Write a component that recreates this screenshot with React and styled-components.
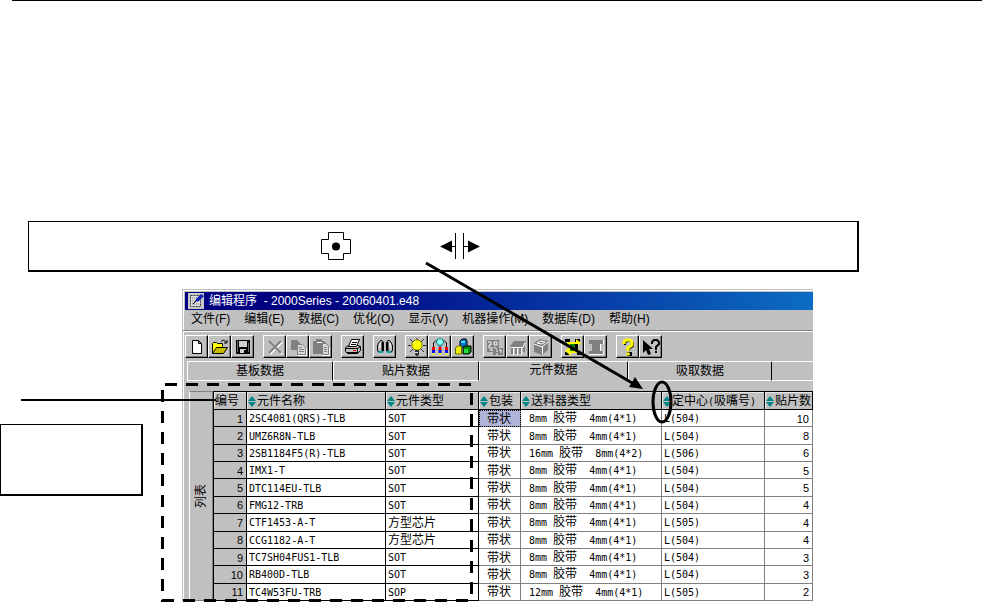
import React, { useState } from 'react';
import styled, { createGlobalStyle } from 'styled-components';

const GlobalStyle = createGlobalStyle`
  * {
    box-sizing: border-box;
  }

  body {
    margin: 0;
    background: #fff;
    color: #000;
    font-family: 'Liberation Sans', 'Noto Sans CJK SC', sans-serif;
    font-size: 12px;
    line-height: 16px;
  }

  button {
    padding: 0;
    border: 0;
    background: none;
    color: inherit;
    font: inherit;
    cursor: pointer;
  }
`;

const Page = styled.div`
  position: relative;
  min-height: 100vh;
  overflow: hidden;
`;

const TopRule = styled.hr`
  height: 1px;
  margin: 0 0 0 12px;
  border: 0;
  background: #000;
`;

const NoteBox = styled.div`
  display: flex;
  align-items: center;
  gap: 88px;
  height: 51px;
  margin: 220px 123px 0 28px;
  padding-left: 291px;
  border: solid #000;
  border-width: 1px 2px 2px 1px;
`;

const Figure = styled.div`
  display: flex;
  margin-top: 17px;
  padding-right: 169px;
`;

const Side = styled.div`
  flex: none;
  width: 182px;
  padding-top: 135px;
`;

const Callout = styled.div`
  width: 143px;
  height: 72px;
  border: solid #000;
  border-width: 1px 2px 2px 1px;
`;

const AppWindow = styled.div`
  flex: 1;
  min-width: 0;
  background: #c0c0c0;
  border-top: 1px solid #c0c0c0;
  border-left: 1px solid #c0c0c0;
  box-shadow: inset 1px 1px #fff;
`;

const TitleBar = styled.div`
  display: flex;
  align-items: center;
  gap: 5px;
  height: 18px;
  margin: 2px 0 0 2px;
  padding-left: 3px;
  background: linear-gradient(90deg, #000080 20%, #0c6cc4);
  color: #fff;
  white-space: pre;
`;

const MenuBar = styled.nav`
  display: flex;
  gap: 14px;
  height: 21px;
  padding-left: 8px;
  border-bottom: 1px solid #808080;
`;

const MenuItem = styled.button`
  height: 18px;
  white-space: nowrap;
`;

const ToolBar = styled.div`
  display: flex;
  gap: 9px;
  height: 30px;
  padding: 3px 0 0 2px;
  border-top: 1px solid #fff;
`;

const ToolGroup = styled.div`
  display: flex;
`;

const ToolButton = styled.button`
  display: flex;
  align-items: center;
  justify-content: center;
  width: 23px;
  height: 23px;
  border: 1px solid;
  border-color: #fff #000 #000 #fff;
  box-shadow: inset -1px -1px #808080;
`;

const TabBar = styled.div`
  display: flex;
  height: 20px;
  padding-left: 4px;
`;

const Tab = styled.button`
  flex: none;
  width: ${(props) => props.$width}px;
  height: 20px;
  padding-bottom: ${(props) => (props.$active ? 2 : 0)}px;
  border-top: 1px solid #fff;
  border-left: 1px solid #fff;
  border-bottom: 1px solid ${(props) => (props.$active ? '#c0c0c0' : '#fff')};
  border-right: 1px solid #000;
  border-radius: 2px 2px 0 0;
`;

const TabRest = styled.div`
  flex: 1;
  border-top: 1px solid #fff;
  border-bottom: 1px solid #fff;
`;

const Content = styled.div`
  display: flex;
  padding-top: 10px;
`;

const ListTab = styled.button`
  flex: none;
  display: flex;
  align-items: center;
  justify-content: center;
  width: 24px;
  margin-left: 6px;
  border: 1px solid;
  border-color: #808080 #808080 #808080 #fff;

  span {
    writing-mode: vertical-rl;
    text-orientation: sideways;
    transform: rotate(180deg);
  }
`;

const Table = styled.table`
  flex: 1;
  min-width: 0;
  height: 210px;
  table-layout: fixed;
  border-collapse: collapse;
  line-height: 14px;
`;

const HeadCell = styled.th`
  height: 18px;
  padding: 1px 0 0 1px;
  overflow: hidden;
  border: 1px solid #000;
  background: #c0c0c0;
  box-shadow: inset 1px 1px #e8e8e8;
  font-weight: 400;
  text-align: left;
  white-space: nowrap;
`;

const SortButton = styled.button`
  display: flex;
  align-items: center;
  gap: 1px;
  height: 14px;
`;

const RowNumber = styled.th`
  padding: 1px 3px 0 0;
  border: 1px solid #000;
  background: #c0c0c0;
  font-size: 11px;
  font-weight: 400;
  text-align: right;
`;

const Cell = styled.td`
  padding: 1px 3px 0 ${(props) => props.$pad || 2}px;
  overflow: hidden;
  border: 1px solid ${(props) => (props.$fixed ? '#000' : '#808080')};
  outline: ${(props) => (props.$selected ? '1px dotted #000' : 'none')};
  outline-offset: -1px;
  background: ${(props) => (props.$selected ? '#b0b4d8' : '#fff')};
  text-align: left;
  white-space: pre;
`;

const PackCell = styled(Cell)`
  text-align: center;
`;

const CountCell = styled(Cell)`
  font-size: 11px;
  text-align: right;
`;

const Mono = styled.span`
  font-family: 'DejaVu Sans Mono', 'Noto Sans CJK SC', monospace;
  font-size: 10px;
`;

const Marks = styled.svg`
  position: absolute;
  top: 0;
  left: 0;
  pointer-events: none;
`;

const Icon = ({ children }) => (
  <svg width='18' height='18' viewBox='0 0 18 18' fill='none' aria-hidden='true'>
    {children}
  </svg>
);

const SortMark = () => (
  <svg width='8' height='11' viewBox='0 0 8 11' aria-hidden='true'>
    <path d='M4 0L8 5H0zM0 6h8L4 11z' fill='#008484' />
  </svg>
);

const icons = {
  新建: (
    <Icon>
      <path d='M4.5 2.5h6l3 3v10h-9zM10.5 2.5v3h3' fill='#fff' stroke='#000' />
    </Icon>
  ),
  打开: (
    <Icon>
      <path d='M1.5 15.5v-10l1-1h3l1 1h5v3' fill='#ff0' stroke='#000' />
      <path d='M1.5 15.5l4-6h11l-4 6z' fill='#c8bc00' stroke='#000' />
      <path d='M10 3.5q3-3 5 1M13 5h3V2' stroke='#000' />
    </Icon>
  ),
  保存: (
    <Icon>
      <path d='M2 2h14v14H3l-1-1z' fill='#000' />
      <path d='M5 3h8v6H5zM6 11h6v4H6z' fill='#d0d0d0' />
      <path d='M10 12h2v3h-2z' fill='#000' />
      <path d='M3.5 3v11M14.5 5v9' stroke='#666' />
    </Icon>
  ),
  删除: (
    <Icon>
      <path d='M4 4l12 12M16 4L4 16' stroke='#fff' strokeWidth='2' />
      <path d='M3 3l12 12M15 3L3 15' stroke='#808080' strokeWidth='2' />
    </Icon>
  ),
  复制: (
    <Icon>
      <path d='M2 2h6l3 3v7H2z' fill='#808080' />
      <path d='M8.5 6.5h5l3 3v7h-8z' fill='#d8d8d8' stroke='#808080' />
      <path d='M10 9.5h3M10 11.5h5M10 13.5h5' stroke='#808080' />
      <path d='M17.5 10v7.5H9' stroke='#fff' />
    </Icon>
  ),
  粘贴: (
    <Icon>
      <path d='M1 3h3V1h6v2h3v13H1z' fill='#808080' />
      <path d='M10.5 5.5h4l2 3v8h-6z' fill='#d8d8d8' stroke='#808080' />
      <path d='M12 9.5h3M12 11.5h3M12 13.5h3' stroke='#808080' />
      <path d='M5 4.5h5M17.5 9v8.5H10' stroke='#fff' />
    </Icon>
  ),
  打印: (
    <Icon>
      <path d='M1.5 9.5l3-2h9l3 1v4l-3 3h-10l-2-2z' fill='#c0c0c0' stroke='#000' />
      <path d='M4.5 8.5l3-7h8l-3 7z' fill='#fff' stroke='#000' />
      <path d='M8 4.5h5M7 6.5h5M1.5 10.5h12l3-2M13.5 10.5v5M3 14.5h10' stroke='#000' />
      <path d='M9 12.5h3' stroke='#f00' />
    </Icon>
  ),
  查找: (
    <Icon>
      <path d='M2.5 5l2-2.5H6l1.5 2V12l-1 2h-4L1.500 12V8zM15.5 5l-2-2.500H12l-1.500 2V12l1 2h4l1-2V8z' fill='#c0c0c0' stroke='#000' />
      <path d='M6.500 4v9M11.500 4v9' stroke='#000' strokeWidth='2' />
      <path d='M4 5v5M14 5v5' stroke='#fff' />
      <path d='M3 14h4M11 14h4' stroke='#00a8b0' strokeWidth='2' />
    </Icon>
  ),
  提示: (
    <Icon>
      <path d='M9 0v3M2 1l3 3M16 1l-3 3M0 7.5h3M15 7.5h3M2 14l3-3M16 14l-3-3' stroke='#333' />
      <path d='M7 2h4l3 3v4l-3 3H7L4 9V5z' fill='#ff0' stroke='#887c00' />
      <path d='M6 5.5L7.500 4' stroke='#fff' />
      <path d='M7 12h4v4l-1 2H8l-1-2z' fill='#333' />
      <path d='M7 14.500h3' stroke='#ddd' />
    </Icon>
  ),
  优化: (
    <Icon>
      <path d='M2.5 9V5l3-3M15.500 9V5l-3-3M9 7v3' stroke='#000' />
      <circle cx='9' cy='4' r='3.5' fill='#8ff' stroke='#077' />
      <path d='M1 9h3v3H1zM7.500 9h3v3h-3zM14 9h3v3h-3z' fill='#f00' />
      <path d='M1 12h3v3H1zM7.500 12h3v3h-3zM14 12h3v3h-3z' fill='#00f' />
      <path d='M1.500 15h2v2h-2zM8 15h2v2H8zM14.500 15h2v2h-2z' fill='#ff0' />
    </Icon>
  ),
  元件: (
    <Icon>
      <path d='M6 3l2-2h4l1 2v6H6z' fill='#0070c0' stroke='#000' />
      <path d='M7 3h4v2H7z' fill='#4df' />
      <path d='M1.500 10l2-2h4v8h-6z' fill='#ee0' stroke='#660' />
      <path d='M9 10l2-2h6v6l-2 2H9z' fill='#080' stroke='#000' />
      <path d='M10 11h4v4h-4z' fill='#2d4' />
    </Icon>
  ),
  基板: (
    <Icon>
      <path d='M1 2h12v8h4v7H7v-3H1z' fill='#808080' />
      <path d='M2 4h3v3H3v3h4M8 4h3v3H8zM8 9l3 2M4 12h3M10 13h2M13 12h2v3M10 16h2' stroke='#fff' />
    </Icon>
  ),
  芯片: (
    <Icon>
      <path d='M1 8l4-5h12l-2 7H2z' fill='#808080' />
      <path d='M5 5h9M3 10v6M7 10v6M11 10v6M15 8v6' stroke='#808080' strokeWidth='2' />
      <path d='M2 9.5h12l2-5M4.5 11v6M8.5 11v6M12.5 11v6' stroke='#fff' />
    </Icon>
  ),
  料盒: (
    <Icon>
      <path d='M2 5l6-4 8 2v9l-6 5-8-3z' fill='#808080' />
      <path d='M2 6l8 3 6-5M10.5 9v7M5 5l4-2 4 1-3 2z' stroke='#fff' />
    </Icon>
  ),
  传送: (
    <Icon>
      <path d='M1 1h5v3H1zM11 1h5v3h-5zM1 14h4v3H1zM13 14h4v3h-4z' fill='#000' />
      <path d='M3 4h9V1l5 4-5 4V7H3zM15 11H7V8l-6 5 6 5v-3h8z' fill='#ff0' />
      <path d='M6 6h5v7H6z' fill='#008000' />
      <path d='M11 6h3v7h-3z' fill='#000' />
    </Icon>
  ),
  停止: (
    <Icon>
      <path d='M2 2h14v4h-3v7h3v3H2v-3h3V6H2z' fill='#808080' />
      <path d='M2 16.5h14.5V13M13.5 6v7M16.5 2v4' stroke='#fff' />
    </Icon>
  ),
  帮助: (
    <Icon>
      <path d='M6 7V5l2-2h4l2 2v3l-4 3v2M9 15h3v3H9z' stroke='#000' strokeWidth='2' />
      <path d='M5 6V4l2-2h4l2 2v3l-4 3v3' stroke='#ff0' strokeWidth='3' />
      <path d='M7.500 14.500h3v3h-3z' fill='#ff0' />
    </Icon>
  ),
  这是什么: (
    <Icon>
      <path d='M1 2v13l3-3 2 5 3-1-2-5h4z' fill='#000' />
      <path d='M10 6V4l2-2h3l2 2v2l-3 3v3M14 13v2' stroke='#000' strokeWidth='2' />
    </Icon>
  ),
};

const menus = ['文件(F)', '编辑(E)', '数据(C)', '优化(O)', '显示(V)', '机器操作(M)', '数据库(D)', '帮助(H)'];

const toolGroups = [
  ['新建', '打开', '保存'],
  ['删除', '复制', '粘贴'],
  ['打印'],
  ['查找'],
  ['提示', '优化', '元件'],
  ['基板', '芯片', '料盒'],
  ['传送', '停止'],
  ['帮助', '这是什么'],
];

const disabledTools = ['删除', '复制', '粘贴', '基板', '芯片', '料盒', '停止'];

const tabs = [
  { label: '基板数据', width: 146 },
  { label: '贴片数据', width: 146 },
  { label: '元件数据', width: 149 },
  { label: '吸取数据', width: 144 },
];

const columns = [
  { label: '元件名称', width: 139 },
  { label: '元件类型', width: 93 },
  { label: '包装', width: 42 },
  { label: '送料器类型', width: 141 },
  { label: '定中心(吸嘴号)', width: 103 },
  { label: '贴片数' },
];

const parts = [
  { name: '2SC4081(QRS)-TLB', type: 'SOT', tape: '8mm', pitch: '4mm(4*1)', center: 'L(504)', count: 10 },
  { name: 'UMZ6R8N-TLB', type: 'SOT', tape: '8mm', pitch: '4mm(4*1)', center: 'L(504)', count: 8 },
  { name: '2SB1184F5(R)-TLB', type: 'SOT', tape: '16mm', pitch: '8mm(4*2)', center: 'L(506)', count: 6 },
  { name: 'IMX1-T', type: 'SOT', tape: '8mm', pitch: '4mm(4*1)', center: 'L(504)', count: 5 },
  { name: 'DTC114EU-TLB', type: 'SOT', tape: '8mm', pitch: '4mm(4*1)', center: 'L(504)', count: 5 },
  { name: 'FMG12-TRB', type: 'SOT', tape: '8mm', pitch: '4mm(4*1)', center: 'L(504)', count: 4 },
  { name: 'CTF1453-A-T', type: '方型芯片', tape: '8mm', pitch: '4mm(4*1)', center: 'L(505)', count: 4 },
  { name: 'CCG1182-A-T', type: '方型芯片', tape: '8mm', pitch: '4mm(4*1)', center: 'L(504)', count: 4 },
  { name: 'TC7SH04FUS1-TLB', type: 'SOT', tape: '8mm', pitch: '4mm(4*1)', center: 'L(504)', count: 3 },
  { name: 'RB400D-TLB', type: 'SOT', tape: '8mm', pitch: '4mm(4*1)', center: 'L(504)', count: 3 },
  { name: 'TC4W53FU-TRB', type: 'SOP', tape: '12mm', pitch: '4mm(4*1)', center: 'L(505)', count: 2 },
];

// 半角字符用等宽字体, 汉字保持 12px
const Mixed = ({ text }) =>
  text
    .split(/([\x20-\x7e]+)/)
    .filter(Boolean)
    .map((part, i) => (/^[\x20-\x7e]/.test(part) ? <Mono key={i}>{part}</Mono> : part));

const App = () => {
  const [activeTab, setActiveTab] = useState('元件数据');
  const [selected, setSelected] = useState(0);

  return (
    <Page>
      <GlobalStyle />
      <TopRule />

      <NoteBox>
        <svg width='32' height='30' viewBox='0 0 32 30' aria-hidden='true'>
          <path d='M8.5 1.5h15v7h7v14h-7v6h-15v-6h-7v-14h7z' fill='#fff' stroke='#000' />
          <circle cx='16' cy='15.5' r='4' />
        </svg>
        <svg width='40' height='26' viewBox='0 0 40 26' aria-hidden='true'>
          <path d='M0 13.5l12-6v12zM40 13.5l-12-6v12z' />
          <path d='M15.5 0v26M23.5 0v26M12 13.5h4M23 13.5h5' stroke='#000' />
        </svg>
      </NoteBox>

      <Figure>
        <Side>
          <Callout />
        </Side>

        <AppWindow>
          <TitleBar>
            <svg width='16' height='16' viewBox='0 0 16 16' aria-hidden='true'>
              <path d='M0 0h16v16H0z' fill='#c8c8c8' />
              <path d='M2.5 2.5h10v11h-10z' fill='#ddd' stroke='#333' strokeDasharray='2 1' />
              <path d='M4 5h5M4 8h3M4 11h7' stroke='#777' strokeDasharray='1 1' />
              <path d='M7 9l1-3 5-5 3 2-5 5z' fill='#12b' />
              <path d='M5 11l3-3' stroke='#000' />
            </svg>
            <span>编辑程序  - 2000Series - 20060401.e48</span>
          </TitleBar>

          <MenuBar>
            {menus.map((menu) => (
              <MenuItem key={menu}>{menu}</MenuItem>
            ))}
          </MenuBar>

          <ToolBar>
            {toolGroups.map((group) => (
              <ToolGroup key={group[0]}>
                {group.map((tool) => (
                  <ToolButton key={tool} aria-label={tool} disabled={disabledTools.includes(tool)}>
                    {icons[tool]}
                  </ToolButton>
                ))}
              </ToolGroup>
            ))}
          </ToolBar>

          <TabBar role='tablist'>
            {tabs.map((tab) => (
              <Tab
                key={tab.label}
                role='tab'
                aria-selected={tab.label === activeTab}
                $width={tab.width}
                $active={tab.label === activeTab}
                onClick={() => setActiveTab(tab.label)}
              >
                {tab.label}
              </Tab>
            ))}
            <TabRest />
          </TabBar>

          <Content>
            <ListTab>
              <span>列表</span>
            </ListTab>
            <Table>
              <colgroup>
                <col width='33' />
                {columns.map((column) => (
                  <col key={column.label} width={column.width} />
                ))}
              </colgroup>
              <thead>
                <tr>
                  <HeadCell scope='col'>编号</HeadCell>
                  {columns.map((column) => (
                    <HeadCell key={column.label} scope='col'>
                      <SortButton>
                        <SortMark />
                        <span>
                          <Mixed text={column.label} />
                        </span>
                      </SortButton>
                    </HeadCell>
                  ))}
                </tr>
              </thead>
              <tbody>
                {parts.map((part, i) => (
                  <tr key={part.name}>
                    <RowNumber scope='row'>{i + 1}</RowNumber>
                    <Cell $fixed>
                      <Mixed text={part.name} />
                    </Cell>
                    <Cell $fixed>
                      <Mixed text={part.type} />
                    </Cell>
                    <PackCell $selected={i === selected} onClick={() => setSelected(i)}>
                      带状
                    </PackCell>
                    <Cell $pad={8}>
                      <Mixed text={`${part.tape} 胶带  ${part.pitch}`} />
                    </Cell>
                    <Cell>
                      <Mixed text={part.center} />
                    </Cell>
                    <CountCell>{part.count}</CountCell>
                  </tr>
                ))}
              </tbody>
            </Table>
          </Content>
        </AppWindow>
      </Figure>

      <Marks width='982' height='602' viewBox='0 0 982 602' fill='none' stroke='#000' aria-hidden='true'>
        <path d='M21 400h195' strokeWidth='2' />
        <path d='M165 384.5h307' strokeWidth='3' strokeDasharray='12 9' />
        <path d='M162.5 390v212' strokeWidth='3' strokeDasharray='12 9' />
        <path d='M471.5 393v209' strokeWidth='3' strokeDasharray='12 9' />
        <path d='M162 600.5h310' strokeWidth='3' strokeDasharray='12 9' />
        <path d='M426 263l208 121' strokeWidth='3' />
        <path d='M643 389l-14-2 6-10z' fill='#000' stroke='none' />
        <ellipse cx='662' cy='402' rx='9' ry='20' strokeWidth='3' />
      </Marks>
    </Page>
  );
};

export default App;
